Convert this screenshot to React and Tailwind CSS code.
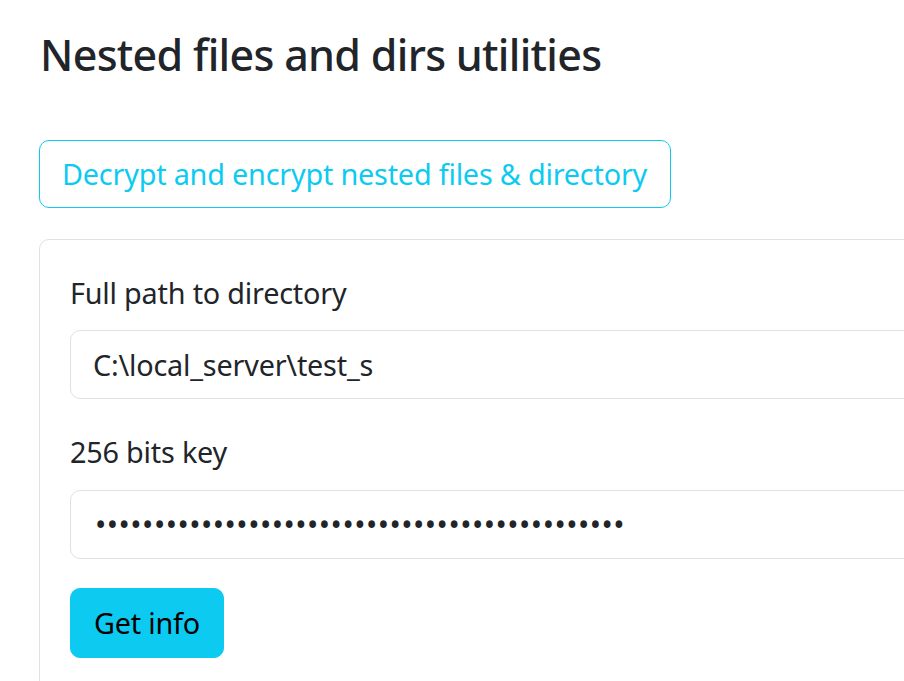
const App = () => {
  const key = "a".repeat(45);

  return (
    <div className="w-[904px] h-[681px] overflow-hidden bg-white text-[#212529] font-['Noto_Sans',sans-serif]">
      <div className="pl-[39px] w-[1100px]">
        <h1 className="pt-[29px] pl-[1px] text-[43px] leading-[52px] font-medium tracking-[-0.7px]">
          Nested files and dirs utilities
        </h1>

        <button className="mt-[59px] border border-[#0dcaf0] rounded-[10px] pl-[22px] pr-[23px] py-[11px] text-[28.8px] leading-[44px] tracking-[-0.2px] text-[#0dcaf0] bg-white">
          Decrypt and encrypt nested files &amp; directory
        </button>

        {/* form card */}
        <div className="mt-[31px] border border-[#dee2e6] rounded-[10px] pl-[30px] pr-[30px] pt-[31px] pb-[40px]">
          <label className="block text-[28.8px] leading-[44px] tracking-[-0.2px]">
            Full path to directory
          </label>
          <input
            type="text"
            readOnly
            value="C:\local_server\test_s"
            className="block mt-[15px] w-full h-[69px] border border-[#dee2e6] rounded-[10px] px-[22px] text-[28.8px] tracking-[-0.2px] text-[#212529] outline-none"
          />

          <label className="block mt-[31px] text-[28.8px] leading-[44px] tracking-[-0.2px]">
            256 bits key
          </label>
          <input
            type="password"
            readOnly
            value={key}
            className="block mt-[16px] w-full h-[69px] border border-[#dee2e6] rounded-[10px] px-[24px] text-[30px] tracking-[0.5px] text-[#212529] outline-none"
          />

          <button className="block mt-[29px] h-[70px] bg-[#0dcaf0] border border-[#0dcaf0] rounded-[10px] px-[23px] text-[28.8px] leading-[44px] tracking-[-0.2px] text-black">
            Get info
          </button>
        </div>
      </div>
    </div>
  );
};

export default App;
